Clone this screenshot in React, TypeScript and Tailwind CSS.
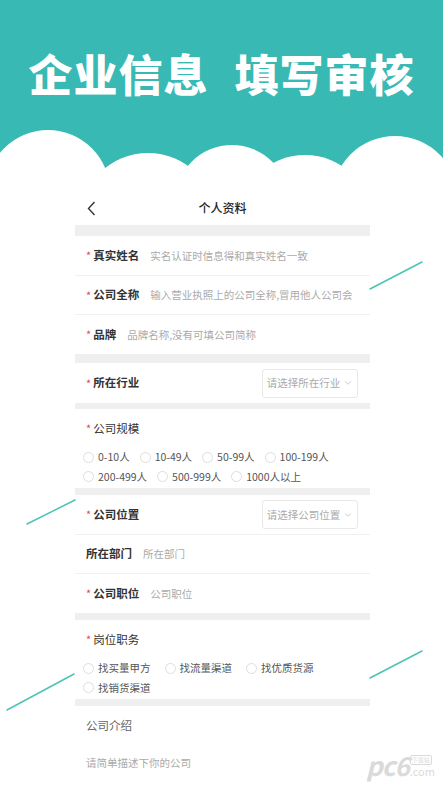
import { ChevronDown } from 'lucide-react'

const font = { fontFamily: '"Noto Sans CJK SC", "Noto Sans", sans-serif' }

function Star() {
  return <span className="mr-[2px] text-[11px] leading-none text-[#e5484d]">*</span>
}

function Bar({ h }: { h: string }) {
  return <div className={`${h} bg-[#efefef]`} />
}

function Radio({ label }: { label: string }) {
  return (
    <div className="flex items-center gap-[4px]">
      <span className="h-[11px] w-[11px] rounded-full border border-[#dedede]" />
      <span className="text-[10.5px] text-[#555]">{label}</span>
    </div>
  )
}

function Select({ text }: { text: string }) {
  return (
    <div className="flex h-[29px] w-[96px] items-center justify-center gap-[3px] rounded-[3px] border border-[#e8e8e8] text-[10.5px] text-[#aaa]">
      {text}
      <ChevronDown className="h-[10px] w-[10px]" strokeWidth={1.5} />
    </div>
  )
}

export default function App() {
  return (
    <div className="relative h-[793px] w-[443px] overflow-hidden bg-white" style={font}>
      {/* banner */}
      <div className="flex h-[120px] justify-center gap-[26px] bg-[#38b9b4] pt-[46px] text-[44px] font-black leading-[54px] tracking-[1px] text-white">
        <span>企业信息</span>
        <span>填写审核</span>
      </div>
      <svg className="block" width="443" height="70" viewBox="0 120 443 70">
        <rect x="0" y="120" width="443" height="70" fill="#38b9b4" />
        <g fill="#fff">
          <circle cx="48" cy="192" r="62" />
          <circle cx="148" cy="222" r="69" />
          <circle cx="232" cy="202" r="57" />
          <circle cx="305" cy="223" r="68" />
          <circle cx="395" cy="199" r="63" />
          <rect x="0" y="175" width="443" height="20" />
        </g>
      </svg>

      {/* form */}
      <div className="ml-[75px] w-[295px]">
        <div className="relative flex h-[35px] items-center justify-center">
          <svg className="absolute left-[12px] top-[11px]" width="9" height="15" viewBox="0 0 9 15">
            <polyline points="7.5,1 1.5,7.5 7.5,14" fill="none" stroke="#333" strokeWidth="1.4" />
          </svg>
          <span className="text-[12px] font-medium text-[#222]">个人资料</span>
        </div>
        <Bar h="h-[11px]" />

        <div className="flex h-[40px] items-center border-b border-[#f0f0f0] pl-[11px]">
          <Star />
          <span className="w-[57px] text-[11.5px] font-bold text-[#333]">真实姓名</span>
          <span className="text-[10.5px] text-[#aaa]">实名认证时信息得和真实姓名一致</span>
        </div>
        <div className="flex h-[39px] items-center overflow-hidden whitespace-nowrap border-b border-[#f0f0f0] pl-[11px]">
          <Star />
          <span className="w-[57px] shrink-0 text-[11.5px] font-bold text-[#333]">公司全称</span>
          <span className="text-[10.5px] text-[#aaa]">输入营业执照上的公司全称,冒用他人公司会</span>
        </div>
        <div className="flex h-[39px] items-center pl-[11px]">
          <Star />
          <span className="w-[34px] text-[11.5px] font-bold text-[#333]">品牌</span>
          <span className="text-[10.5px] text-[#aaa]">品牌名称,没有可填公司简称</span>
        </div>
        <Bar h="h-[9px]" />

        <div className="flex h-[40px] items-center justify-between pl-[11px] pr-[12px]">
          <div className="flex items-center">
            <Star />
            <span className="text-[11.5px] font-bold text-[#333]">所在行业</span>
          </div>
          <Select text="请选择所在行业" />
        </div>
        <Bar h="h-[6px]" />

        <div className="h-[79px] pl-[8px] pt-[11px]">
          <div className="flex items-center pl-[3px]">
            <Star />
            <span className="text-[11.5px] text-[#333]">公司规模</span>
          </div>
          <div className="mt-[12px] flex flex-wrap gap-x-[10px] gap-y-[4px]">
            <Radio label="0-10人" />
            <Radio label="10-49人" />
            <Radio label="50-99人" />
            <Radio label="100-199人" />
            <Radio label="200-499人" />
            <Radio label="500-999人" />
            <Radio label="1000人以上" />
          </div>
        </div>
        <Bar h="h-[7px]" />

        <div className="flex h-[40px] items-center justify-between border-b border-[#f0f0f0] pl-[11px] pr-[12px]">
          <div className="flex items-center">
            <Star />
            <span className="text-[11.5px] font-bold text-[#333]">公司位置</span>
          </div>
          <Select text="请选择公司位置" />
        </div>
        <div className="flex h-[39px] items-center border-b border-[#f0f0f0] pl-[11px]">
          <span className="w-[57px] text-[11.5px] font-bold text-[#333]">所在部门</span>
          <span className="text-[10.5px] text-[#aaa]">所在部门</span>
        </div>
        <div className="flex h-[39px] items-center pl-[11px]">
          <Star />
          <span className="w-[57px] text-[11.5px] font-bold text-[#333]">公司职位</span>
          <span className="text-[10.5px] text-[#aaa]">公司职位</span>
        </div>
        <Bar h="h-[7px]" />

        <div className="h-[79px] pl-[8px] pt-[11px]">
          <div className="flex items-center pl-[3px]">
            <Star />
            <span className="text-[11.5px] text-[#333]">岗位职务</span>
          </div>
          <div className="mt-[12px] flex flex-wrap gap-x-[14px] gap-y-[4px]">
            <Radio label="找买量甲方" />
            <Radio label="找流量渠道" />
            <Radio label="找优质货源" />
            <Radio label="找销货渠道" />
          </div>
        </div>
        <Bar h="h-[7px]" />

        <div className="pl-[11px] pt-[11px]">
          <div className="text-[11.5px] text-[#666]">公司介绍</div>
          <div className="mt-[21px] text-[10.5px] text-[#aaa]">请简单描述下你的公司</div>
        </div>
      </div>

      {/* decorative teal strokes */}
      <svg className="pointer-events-none absolute left-0 top-0" width="443" height="793">
        <g stroke="#4cc3b6" strokeWidth="1.5" strokeLinecap="round">
          <line x1="370" y1="289" x2="422" y2="262" />
          <line x1="27" y1="524" x2="75" y2="500" />
          <line x1="370" y1="678" x2="422" y2="651" />
          <line x1="7" y1="710" x2="74" y2="674" />
        </g>
      </svg>

      {/* watermark */}
      <div className="absolute left-[366px] top-[752px] flex items-end text-[#dadada]">
        <span className="text-[26px] font-bold italic leading-none tracking-[-1px]">pc6</span>
        <div className="ml-[1px] flex flex-col items-start">
          <span className="rounded-[2px] border border-[#dadada] px-[1px] text-[6px] leading-[8px]">下载站</span>
          <span className="text-[11px] leading-[13px]">.com</span>
        </div>
      </div>
    </div>
  )
}
